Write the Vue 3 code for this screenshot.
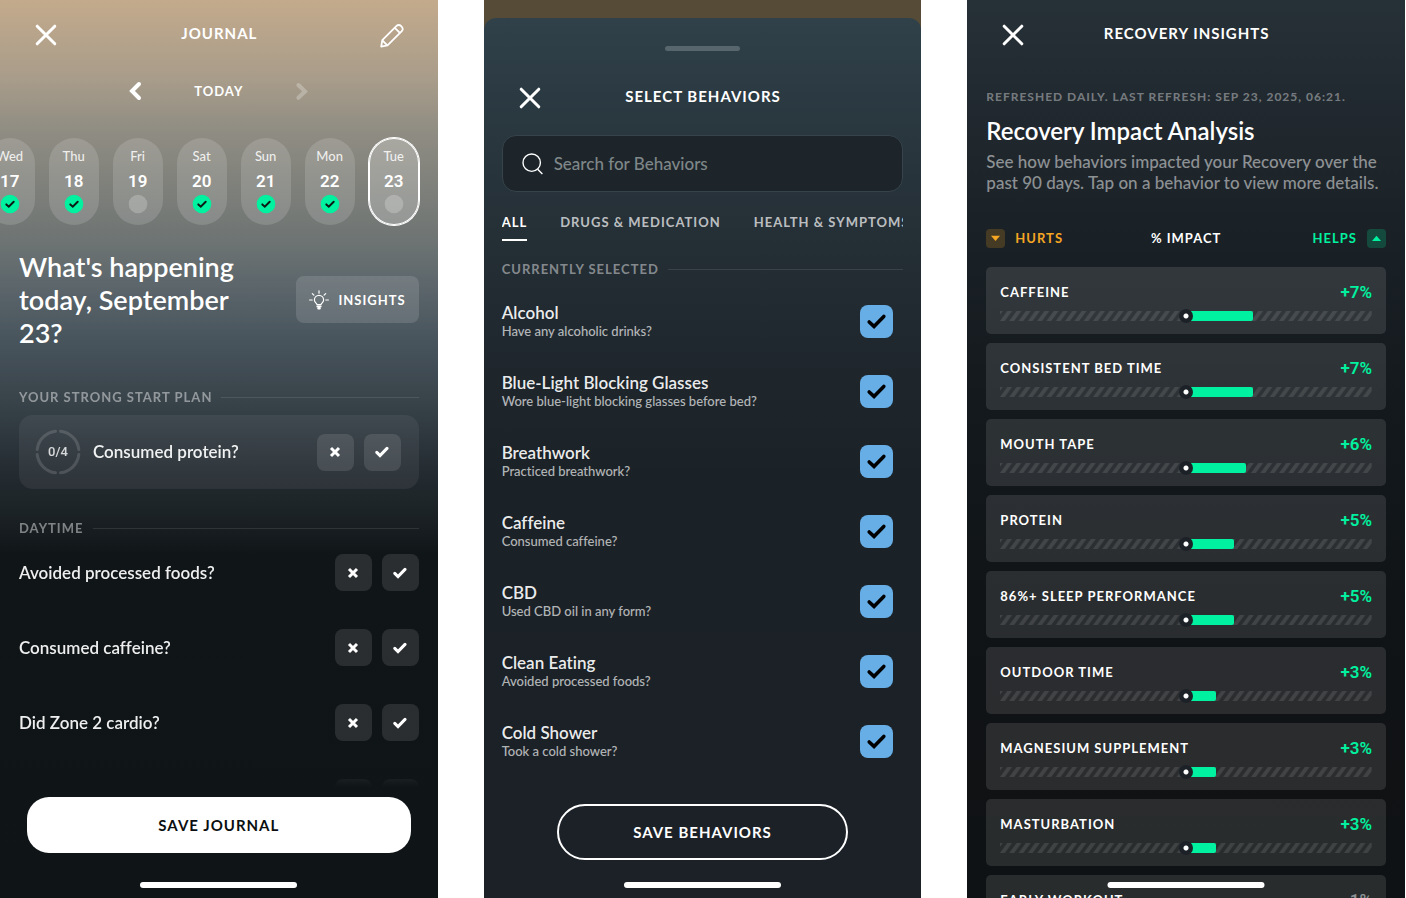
<script setup>
import { ref } from 'vue'

const days = [
  { name: 'Wed', date: 17, done: true },
  { name: 'Thu', date: 18, done: true },
  { name: 'Fri', date: 19, done: false },
  { name: 'Sat', date: 20, done: true },
  { name: 'Sun', date: 21, done: true },
  { name: 'Mon', date: 22, done: true },
  { name: 'Tue', date: 23, done: false, active: true },
]

const questions = ['Avoided processed foods?', 'Consumed caffeine?', 'Did Zone 2 cardio?', '']

const tabs = ['All', 'Drugs & Medication', 'Health & Symptoms']

const behaviors = ref([
  { name: 'Alcohol', hint: 'Have any alcoholic drinks?', on: true },
  { name: 'Blue-Light Blocking Glasses', hint: 'Wore blue-light blocking glasses before bed?', on: true },
  { name: 'Breathwork', hint: 'Practiced breathwork?', on: true },
  { name: 'Caffeine', hint: 'Consumed caffeine?', on: true },
  { name: 'CBD', hint: 'Used CBD oil in any form?', on: true },
  { name: 'Clean Eating', hint: 'Avoided processed foods?', on: true },
  { name: 'Cold Shower', hint: 'Took a cold shower?', on: true },
])

const impacts = [
  { name: 'Caffeine', value: '+7%', bar: 18 },
  { name: 'Consistent Bed Time', value: '+7%', bar: 18 },
  { name: 'Mouth Tape', value: '+6%', bar: 16 },
  { name: 'Protein', value: '+5%', bar: 13 },
  { name: '86%+ Sleep Performance', value: '+5%', bar: 13 },
  { name: 'Outdoor Time', value: '+3%', bar: 8 },
  { name: 'Magnesium Supplement', value: '+3%', bar: 8 },
  { name: 'Masturbation', value: '+3%', bar: 8 },
  { name: 'Early Workout', value: '-1%', bar: 0, neutral: true },
]
</script>

<template>
  <main class="board">
    <section class="screen journal">
      <header class="bar">
        <button class="icon-btn" aria-label="Close">
          <svg width="22" height="22" viewBox="0 0 22 22"><path class="cross" d="M2.2 2.2 19.8 19.8M19.8 2.2 2.2 19.8" /></svg>
        </button>
        <h2 class="bar-title">Journal</h2>
        <button class="icon-btn end" aria-label="Edit">
          <svg width="24" height="24" viewBox="0 0 24 24" class="line-icon">
            <path d="M1.2 22.6 2.3 16.2 16.6 1.9a3 3 0 0 1 4.3 0l.9.9a3 3 0 0 1 0 4.3L7.5 21.4Z" />
            <path d="M14.8 3.8 19.9 8.9M2.4 16.4 7.3 21.3" />
          </svg>
        </button>
      </header>

      <div class="day-nav">
        <button class="icon-btn" aria-label="Previous day">
          <svg width="14" height="20" viewBox="0 0 14 20"><path class="chev" d="M11 3 4 10l7 7" /></svg>
        </button>
        <span class="caps">Today</span>
        <button class="icon-btn faint" aria-label="Next day">
          <svg width="14" height="20" viewBox="0 0 14 20"><path class="chev" d="M3.4 4 10 10.4l-6.6 6.4" /></svg>
        </button>
      </div>

      <div class="days">
        <button v-for="d in days" :key="d.date" class="day" :class="{ active: d.active }">
          <span class="day-name">{{ d.name }}</span>
          <span class="day-date">{{ d.date }}</span>
          <svg width="20" height="20" viewBox="0 0 20 20">
            <circle cx="10" cy="10" r="9.3" :class="d.done ? 'dot-on' : 'dot-off'" />
            <path v-if="d.done" class="dot-check" d="M6.3 10.4 8.8 12.7 13.7 7.8" />
          </svg>
        </button>
      </div>

      <div class="intro">
        <h1>What's happening today, September 23?</h1>
        <button class="insights">
          <svg width="20" height="20" viewBox="0 0 20 20" class="bulb">
            <path d="M8 14.6c0-1.3-2.6-2-2.6-4.7a4.6 4.6 0 0 1 9.2 0c0 2.7-2.6 3.4-2.6 4.7Z" />
            <path d="M10 .8v2.4M3.3 3.6l1.6 1.6M16.7 3.6l-1.6 1.6M.6 10h2.6M19.4 10h-2.6" />
            <path class="base" d="M8.4 16.4h3.2M9.2 18.4h1.6" />
          </svg>
          <span class="caps">Insights</span>
        </button>
      </div>

      <div class="list fade">
        <h3 class="section">Your strong start plan</h3>
        <div class="plan">
          <div class="ring">
            <svg width="46" height="46" viewBox="0 0 46 46">
              <circle cx="23" cy="23" r="21" pathLength="100" />
            </svg>
            <span>0/4</span>
          </div>
          <span class="question">Consumed protein?</span>
          <button class="answer" aria-label="No">
            <svg width="12" height="12" viewBox="0 0 12 12"><path class="no" d="M2 2l8 8M10 2l-8 8" /></svg>
          </button>
          <button class="answer" aria-label="Yes">
            <svg width="14" height="12" viewBox="0 0 14 12"><path class="yes" d="M1.8 6.4 5 9.6 12 2.4" /></svg>
          </button>
        </div>

        <h3 class="section daytime">Daytime</h3>
        <div v-for="q in questions" :key="q" class="row">
          <span class="question">{{ q }}</span>
          <button class="answer" aria-label="No">
            <svg width="12" height="12" viewBox="0 0 12 12"><path class="no" d="M2 2l8 8M10 2l-8 8" /></svg>
          </button>
          <button class="answer" aria-label="Yes">
            <svg width="14" height="12" viewBox="0 0 14 12"><path class="yes" d="M1.8 6.4 5 9.6 12 2.4" /></svg>
          </button>
        </div>
      </div>

      <footer class="foot">
        <button class="save solid">Save Journal</button>
        <div class="home"></div>
      </footer>
    </section>

    <section class="screen picker">
      <div class="sheet">
        <div class="handle"></div>
        <header class="bar">
          <button class="icon-btn" aria-label="Close">
            <svg width="22" height="22" viewBox="0 0 22 22"><path class="cross" d="M2.2 2.2 19.8 19.8M19.8 2.2 2.2 19.8" /></svg>
          </button>
          <h2 class="bar-title">Select Behaviors</h2>
        </header>

        <label class="search">
          <svg width="22" height="22" viewBox="0 0 22 22"><circle cx="9.7" cy="9.7" r="8.7" /><path d="M15.6 16.2 20.4 21" /></svg>
          <input type="text" placeholder="Search for Behaviors" aria-label="Search for Behaviors" />
        </label>

        <nav class="tabs">
          <button v-for="(t, i) in tabs" :key="t" class="tab" :class="{ current: i === 0 }">{{ t }}</button>
        </nav>

        <div class="list">
          <h3 class="section">Currently selected</h3>
          <label v-for="b in behaviors" :key="b.name" class="behavior">
            <span class="behavior-text">
              <span class="behavior-name">{{ b.name }}</span>
              <span class="behavior-hint">{{ b.hint }}</span>
            </span>
            <span class="tick">
              <input v-model="b.on" type="checkbox" />
              <svg v-if="b.on" width="33" height="33" viewBox="0 0 33 33"><path d="M9.2 17 14 21.4 23.8 11.4" /></svg>
            </span>
          </label>
        </div>

        <footer class="foot">
          <button class="save outline">Save Behaviors</button>
          <div class="home"></div>
        </footer>
      </div>
    </section>

    <section class="screen recovery">
      <header class="bar">
        <button class="icon-btn" aria-label="Close">
          <svg width="22" height="22" viewBox="0 0 22 22"><path class="cross" d="M2.2 2.2 19.8 19.8M19.8 2.2 2.2 19.8" /></svg>
        </button>
        <h2 class="bar-title">Recovery Insights</h2>
      </header>

      <div class="summary">
        <p class="refreshed">Refreshed daily. Last refresh: Sep 23, 2025, 06:21.</p>
        <h1>Recovery Impact Analysis</h1>
        <p class="lead">See how behaviors impacted your Recovery over the past 90 days. Tap on a behavior to view more details.</p>
      </div>

      <div class="legend">
        <span class="hurts">
          <svg width="19" height="19" viewBox="0 0 19 19"><rect width="19" height="19" rx="4" /><path d="M5 6.8h9L9.5 12Z" /></svg>
          Hurts
        </span>
        <span>% Impact</span>
        <span class="helps">
          Helps
          <svg width="19" height="19" viewBox="0 0 19 19"><rect width="19" height="19" rx="4" /><path d="M5 12h9L9.5 6.8Z" /></svg>
        </span>
      </div>

      <svg class="defs" width="0" height="0" aria-hidden="true">
        <defs>
          <pattern id="hatch" width="9.3" height="10" patternUnits="userSpaceOnUse">
            <path d="M0 10 7.3 0H12L4.7 10ZM-9.3 10-2 0H2.7L-4.6 10Z" />
          </pattern>
        </defs>
      </svg>

      <div class="cards">
        <article v-for="m in impacts" :key="m.name" class="card" :class="{ neutral: m.neutral }">
          <div class="card-top">
            <span class="card-name">{{ m.name }}</span>
            <span class="card-value">{{ m.value }}</span>
          </div>
          <div class="track">
            <svg width="100%" height="10"><rect width="100%" height="10" fill="url(#hatch)" /></svg>
            <div class="fill" :style="{ width: m.bar + '%' }"></div>
            <div class="marker"></div>
          </div>
        </article>
      </div>
      <div class="home floating"></div>
    </section>
  </main>
</template>

<style>
body {
  background: #fff;
}
</style>

<style scoped>
.board {
  display: grid;
  grid-template-columns: repeat(3, minmax(0, 1fr));
  gap: 46px;
  height: 100vh;
  padding-right: 1px;
  box-sizing: border-box;
  font-family: Lato, "Open Sans", sans-serif;
  font-variant-ligatures: none;
  color: #fff;
}
.board * {
  box-sizing: border-box;
}
h1, h2, h3, p {
  margin: 0;
}
button {
  padding: 0;
  border: 0;
  background: none;
  color: inherit;
  font: inherit;
}
svg {
  display: block;
  fill: none;
}
.screen {
  display: flex;
  flex-direction: column;
  min-height: 0;
  overflow: hidden;
  position: relative;
}
.journal {
  background: linear-gradient(180deg, #c3aa8c 0, #a89c8a 80px, #908d83 130px, #6e7473 240px, #5c666b 285px, #4a565e 335px, #38434a 400px, #22292f 480px, #1f2629 500px, #101518 555px, #0f1417 100%);
}
.picker {
  background: #554b37;
  padding-top: 18px;
}
.sheet {
  flex: 1;
  min-height: 0;
  display: flex;
  flex-direction: column;
  border-radius: 12px 12px 0 0;
  background: linear-gradient(180deg, #30414a 0, #2a3840 100px, #242e35 230px, #1e262c 360px, #1b2227 460px, #1b2127 100%);
}
.recovery {
  background: linear-gradient(180deg, #263137 0, #222a31 90px, #1b2227 220px, #13191d 400px, #101417 600px, #101214 780px, #0e1214 100%);
}

.bar {
  display: grid;
  grid-template-columns: 1fr auto 1fr;
  align-items: start;
  padding: 24px 34px 0 35px;
}
.bar-title {
  font-size: 15px;
  line-height: 18px;
  font-weight: 700;
  letter-spacing: 1px;
  text-transform: uppercase;
}
.icon-btn {
  justify-self: start;
}
.icon-btn.end {
  justify-self: end;
}
.cross {
  stroke: #fff;
  stroke-width: 3;
  stroke-linecap: round;
}
.line-icon path {
  stroke: #fff;
  stroke-width: 1.8;
  stroke-linejoin: round;
}
.caps {
  font-size: 13px;
  line-height: 18px;
  font-weight: 700;
  letter-spacing: 1px;
  text-transform: uppercase;
}

.day-nav {
  display: flex;
  justify-content: center;
  align-items: center;
  gap: 52px;
  margin-top: 33px;
}
.chev {
  stroke: #fff;
  stroke-width: 4;
  stroke-linecap: round;
}
.faint {
  opacity: 0.25;
}

.days {
  display: flex;
  justify-content: flex-end;
  gap: 14px;
  padding: 0 19px;
  margin-top: 37px;
}
.day {
  flex: none;
  width: 50px;
  height: 87px;
  border-radius: 25px;
  background: rgba(255, 255, 255, 0.14);
  display: flex;
  flex-direction: column;
  align-items: center;
  padding-top: 9px;
}
.day.active {
  background: rgba(255, 255, 255, 0.24);
  box-shadow: 0 0 0 1px #fff, inset 0 0 0 1px #fff;
}
.day-name {
  font-family: "Lato Medium", Lato, "Open Sans", sans-serif;
  font-size: 13px;
  line-height: 18px;
  color: rgba(255, 255, 255, 0.85);
}
.day-date {
  font-family: Roboto, sans-serif;
  font-weight: 600;
  font-size: 17px;
  line-height: 20px;
  margin: 6px 0 3px;
}
.dot-on {
  fill: #00f19f;
}
.dot-off {
  fill: rgba(255, 255, 255, 0.22);
}
.dot-check {
  stroke: #0b1a16;
  stroke-width: 2;
  stroke-linecap: round;
}

.intro {
  display: flex;
  align-items: center;
  justify-content: space-between;
  gap: 40px;
  padding: 0 19px;
  margin-top: 25px;
}
.intro h1 {
  font-family: "Lato Semibold", "Lato Medium", Lato, "Open Sans", sans-serif;
  font-size: 27px;
  line-height: 33px;
  font-weight: 500;
}
.insights {
  flex: none;
  display: flex;
  align-items: center;
  gap: 9px;
  height: 47px;
  padding: 0 13px;
  border-radius: 8px;
  background: rgba(255, 255, 255, 0.13);
}
.bulb path {
  stroke: #fff;
  stroke-width: 1.2;
  stroke-linecap: round;
}
.bulb .base {
  stroke-width: 2;
}

.list {
  flex: 1;
  min-height: 0;
  overflow: hidden;
  padding: 0 19px;
}
.fade {
  padding-top: 39px;
  -webkit-mask-image: linear-gradient(180deg, #000 calc(100% - 24px), transparent 100%);
  mask-image: linear-gradient(180deg, #000 calc(100% - 24px), transparent 100%);
}
.section {
  display: flex;
  align-items: center;
  gap: 9px;
  font-size: 13px;
  line-height: 18px;
  font-weight: 700;
  letter-spacing: 1px;
  text-transform: uppercase;
  color: rgba(255, 255, 255, 0.45);
}
.section::after {
  content: "";
  flex: 1;
  height: 1px;
  background: rgba(255, 255, 255, 0.1);
}
.plan {
  display: flex;
  align-items: center;
  gap: 10px;
  height: 74px;
  margin-top: 9px;
  padding: 0 18px 0 16px;
  border-radius: 14px;
  background: rgba(255, 255, 255, 0.06);
}
.ring {
  display: grid;
  place-items: center;
  margin-right: 2px;
}
.ring > * {
  grid-area: 1 / 1;
}
.ring circle {
  stroke: rgba(255, 255, 255, 0.14);
  stroke-width: 3;
  stroke-linecap: round;
  stroke-dasharray: 21 4;
  stroke-dashoffset: -2;
}
.ring span {
  font: 500 13px/18px Roboto, sans-serif;
  color: rgba(255, 255, 255, 0.8);
}
.question {
  flex: 1;
  font-family: "Lato Semibold", "Lato Medium", Lato, "Open Sans", sans-serif;
  font-size: 17px;
  line-height: 22px;
  font-weight: 500;
  color: rgba(255, 255, 255, 0.93);
}
.answer {
  width: 37px;
  height: 37px;
  display: grid;
  place-items: center;
  border-radius: 8px;
  background: rgba(255, 255, 255, 0.11);
}
.no,
.yes {
  stroke: #fff;
  stroke-width: 3;
}
.yes {
  stroke-linecap: round;
}
.section.daytime {
  margin-top: 30px;
  margin-bottom: 17px;
}
.row {
  display: flex;
  align-items: center;
  gap: 10px;
  margin-bottom: 38px;
}

.foot {
  flex: none;
  display: flex;
  flex-direction: column;
  align-items: center;
  padding: 9px 27px 10px;
}
.save {
  height: 56px;
  font-size: 15px;
  font-weight: 700;
  letter-spacing: 1px;
  text-transform: uppercase;
}
.save.solid {
  width: 100%;
  border-radius: 22px;
  background: #fff;
  color: #0b0f11;
}
.save.outline {
  width: 76%;
  border: 2px solid #fff;
  border-radius: 28px;
}
.home {
  width: 157px;
  height: 6px;
  border-radius: 3px;
  background: #fff;
  margin-top: 29px;
}
.picker .home {
  margin-top: 22px;
}

.handle {
  width: 75px;
  height: 5px;
  margin: 28px auto 0;
  border-radius: 3px;
  background: #57656d;
}
.sheet .bar {
  padding-top: 36px;
}
.search {
  flex: none;
  display: flex;
  align-items: center;
  gap: 10px;
  height: 57px;
  margin: 26px 18px 0;
  padding: 0 19px;
  border: 1px solid #36434a;
  border-radius: 14px;
  background: #1d252b;
}
.search svg {
  flex: none;
  stroke: #fff;
  stroke-width: 1.4;
}
.search input {
  flex: 1;
  min-width: 0;
  padding: 0;
  border: 0;
  outline: 0;
  background: none;
  color: #fff;
  font: 500 17px/22px "Lato Medium", Lato, "Open Sans", sans-serif;
}
.search input::placeholder {
  color: #7f8788;
}
.tabs {
  flex: none;
  display: flex;
  gap: 33px;
  margin: 21px 18px 0;
  overflow: hidden;
}
.tab {
  flex: none;
  padding-bottom: 8px;
  border-bottom: 2px solid transparent;
  font-size: 13px;
  line-height: 18px;
  font-weight: 700;
  letter-spacing: 1px;
  text-transform: uppercase;
  color: rgba(255, 255, 255, 0.7);
}
.tab.current {
  color: #fff;
  border-color: #fff;
}
.picker .list {
  padding: 19px 18px 0;
}
.behavior {
  display: flex;
  align-items: center;
  justify-content: space-between;
  height: 70px;
  padding-right: 10px;
}
.picker .section {
  margin-bottom: 8px;
}
.behavior-text {
  display: flex;
  flex-direction: column;
}
.behavior-name {
  font-family: "Lato Semibold", "Lato Medium", Lato, "Open Sans", sans-serif;
  font-size: 17px;
  line-height: 20px;
  font-weight: 500;
  color: rgba(255, 255, 255, 0.93);
}
.behavior-hint {
  font-family: "Lato Medium", Lato, "Open Sans", sans-serif;
  font-size: 13px;
  line-height: 17px;
  color: rgba(255, 255, 255, 0.68);
}
.tick {
  display: grid;
}
.tick > * {
  grid-area: 1 / 1;
}
.tick input {
  appearance: none;
  width: 33px;
  height: 33px;
  margin: 0;
  border-radius: 8px;
  background: #67aee6;
}
.tick svg {
  pointer-events: none;
  stroke: #000;
  stroke-width: 3.6;
  stroke-linecap: round;
}

.summary {
  padding: 42px 19px 0;
}
.refreshed {
  font-size: 12px;
  line-height: 18px;
  font-weight: 700;
  letter-spacing: 1px;
  text-transform: uppercase;
  color: rgba(255, 255, 255, 0.4);
}
.summary h1 {
  margin-top: 11px;
  font-family: "Lato Semibold", "Lato Medium", Lato, "Open Sans", sans-serif;
  font-size: 24px;
  line-height: 28px;
  font-weight: 500;
}
.lead {
  margin-top: 6px;
  margin-right: -8px;
  font-family: "Lato Medium", Lato, "Open Sans", sans-serif;
  font-size: 17px;
  line-height: 21px;
  font-weight: 400;
  color: rgba(255, 255, 255, 0.5);
}
.legend {
  display: grid;
  grid-template-columns: 1fr auto 1fr;
  align-items: center;
  padding: 0 19px;
  margin-top: 35px;
  font-size: 13px;
  line-height: 20px;
  font-weight: 700;
  letter-spacing: 1px;
  text-transform: uppercase;
}
.hurts,
.helps {
  display: flex;
  align-items: center;
  gap: 10px;
}
.hurts {
  color: #f5a623;
}
.helps {
  color: #00f19f;
  justify-content: flex-end;
}
.legend svg {
  fill: currentColor;
}
.legend rect {
  opacity: 0.2;
}
.defs {
  position: absolute;
}
.defs path {
  fill: rgba(255, 255, 255, 0.11);
}
.cards {
  flex: 1;
  min-height: 0;
  overflow: hidden;
  display: flex;
  flex-direction: column;
  gap: 9px;
  padding: 0 19px;
  margin-top: 19px;
}
.card {
  flex: none;
  padding: 15px 14px 13px;
  border-radius: 5px;
  background: rgba(255, 255, 255, 0.11);
}
.card-top {
  display: flex;
  justify-content: space-between;
  align-items: center;
  height: 20px;
}
.card-name {
  font-size: 13px;
  font-weight: 700;
  letter-spacing: 1px;
  text-transform: uppercase;
}
.card-value {
  font: 600 17px/20px Roboto, sans-serif;
  color: #00f19f;
}
.neutral .card-value {
  color: #8b9092;
}
.track {
  position: relative;
  height: 10px;
  margin-top: 9px;
}
.fill {
  position: absolute;
  top: 0;
  left: 50%;
  height: 10px;
  border-radius: 0 2px 2px 0;
  background: #00f19f;
}
.marker {
  position: absolute;
  top: 50%;
  left: 50%;
  width: 14px;
  height: 14px;
  border-radius: 50%;
  background: radial-gradient(circle, #fff 2px, #1b2127 3px);
  transform: translate(-50%, -50%);
}
.home.floating {
  position: absolute;
  left: 50%;
  bottom: 10px;
  margin: 0;
  transform: translateX(-50%);
}
</style>
